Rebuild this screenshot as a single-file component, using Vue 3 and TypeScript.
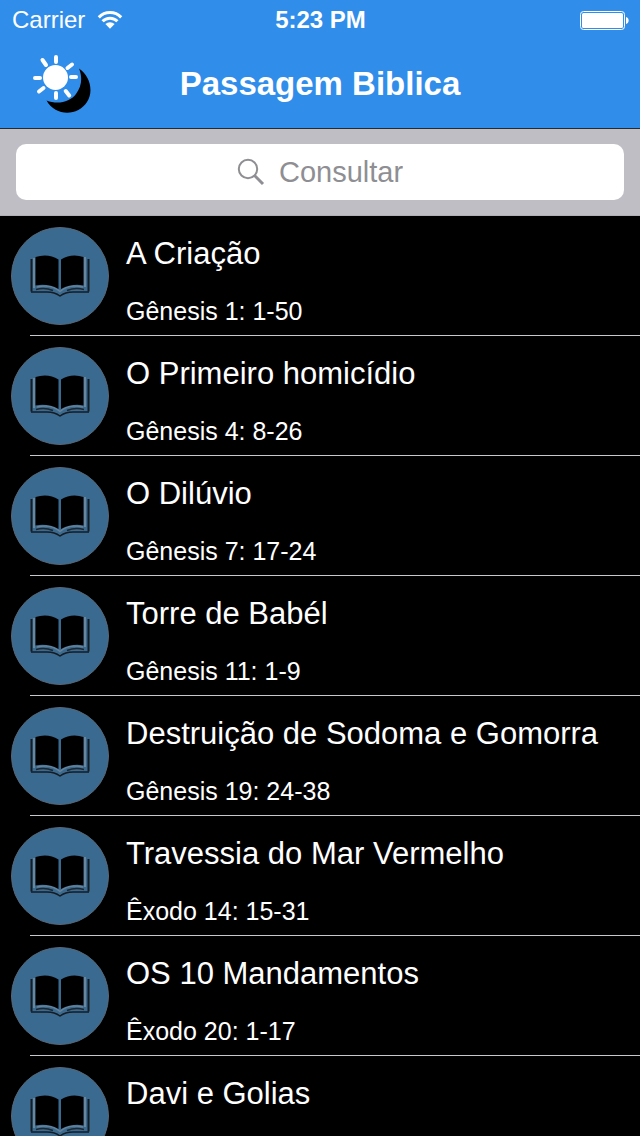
<script setup lang="ts">
import { computed, ref } from 'vue'

interface Passage {
  title: string
  reference: string
}

const passages: Passage[] = [
  { title: 'A Criação', reference: 'Gênesis 1: 1-50' },
  { title: 'O Primeiro homicídio', reference: 'Gênesis 4: 8-26' },
  { title: 'O Dilúvio', reference: 'Gênesis 7: 17-24' },
  { title: 'Torre de Babél', reference: 'Gênesis 11: 1-9' },
  { title: 'Destruição de Sodoma e Gomorra', reference: 'Gênesis 19: 24-38' },
  { title: 'Travessia do Mar Vermelho', reference: 'Êxodo 14: 15-31' },
  { title: 'OS 10 Mandamentos', reference: 'Êxodo 20: 1-17' },
  { title: 'Davi e Golias', reference: '' },
]

const query = ref('')
const light = ref(false)

const visible = computed(() =>
  passages.filter((p) => p.title.toLowerCase().includes(query.value.trim().toLowerCase())),
)
</script>

<template>
  <div class="screen" :class="{ light }">
    <header class="top">
      <div class="status">
        <div class="carrier">
          <span>Carrier</span>
          <svg width="26" height="20" viewBox="0 0 26 20" aria-hidden="true">
            <g fill="none" stroke="#fff" stroke-width="3">
              <path d="M1.8 7.4a15.5 15.5 0 0 1 22.4 0" />
              <path d="M5.6 11.3a10.3 10.3 0 0 1 14.8 0" />
            </g>
            <path d="M8.4 14a6.6 6.6 0 0 1 9.2 0L13 18.8z" fill="#fff" />
          </svg>
        </div>
        <time class="clock">5:23 PM</time>
        <svg class="battery" width="50" height="20" viewBox="0 0 50 20" aria-hidden="true">
          <rect x="1.5" y="1.5" width="44" height="18" rx="3" fill="none" stroke="#fff" />
          <rect x="3" y="3" width="41" height="15" rx="1.5" fill="#fff" />
          <path d="M47 7c3.500 .8 3.500 6.200 0 7z" fill="#fff" />
        </svg>
      </div>
      <nav class="bar">
        <button class="mode" type="button" aria-label="Modo noturno" @click="light = !light">
          <svg width="60" height="60" viewBox="32 54 60 60" aria-hidden="true">
            <path d="M79 68.500C90 76 94 91 87 102C78 116 56 117 46.500 100.500C58 105 70 102 76 94C82 86 82.500 77 79 68.500z" fill="#000" />
            <circle cx="55.500" cy="77.500" r="12.500" fill="#fff" />
            <g stroke="#fff" stroke-width="4" stroke-linecap="round">
              <path d="M56 57v5M56 93v5M35 78h5M71 77h5M42.500 60l3.500 5M65.700 91l3.500 4.500M67.500 68l4.500-3.500M39 91.500l4.500-3.500" />
            </g>
          </svg>
        </button>
        <h1>Passagem Biblica</h1>
      </nav>
    </header>

    <div class="search">
      <label class="field">
        <svg width="28" height="28" viewBox="0 0 28 28" aria-hidden="true">
          <circle cx="11" cy="11" r="9.200" fill="none" stroke="#8e8e93" stroke-width="2" />
          <path d="M17.500 17.500l8.500 8.500" stroke="#8e8e93" stroke-width="3" />
        </svg>
        <input v-model="query" type="text" placeholder="Consultar" aria-label="Consultar" />
      </label>
    </div>

    <ul class="list">
      <li v-for="p in visible" :key="p.title">
        <a class="row" href="#">
          <svg class="book" width="98" height="98" viewBox="0 0 98 98" aria-hidden="true">
            <circle cx="49" cy="49" r="48.500" fill="#3a6a8f" stroke="#56697a" />
            <path d="M20.500 32v32.500M77.500 32v32.500" stroke="#151c24" stroke-width="2" />
            <path d="M23 31v30M74 30v30" stroke="#7890a4" stroke-width="1.500" />
            <path d="M20 65h16c5 0 9 1 13 4c4-3 8-4 13-4h16" fill="none" stroke="#151c24" stroke-width="1.500" />
            <path d="M26 60c9-2 17-1 23 4.500c6-5.500 14-6.500 23-4.500" fill="none" stroke="#688298" stroke-width="1.500" />
            <path d="M24.500 30c8-2.500 16-2 23 2.500v29.500c-7-4-15-5-23-3.500z" fill="#000" />
            <path d="M50 32.500c7-4.500 15-5 22.500-2.500v28.500c-7-1.500-15-.5-22.500 3.500z" fill="#000" />
            <path d="M25 62.500c6-1.500 12-1 17 1M73 62.500c-6-1.500-12-1-17 1" fill="none" stroke="#1b2731" stroke-width="1.500" />
          </svg>
          <span class="text">
            <span class="title">{{ p.title }}</span>
            <span v-if="p.reference" class="reference">{{ p.reference }}</span>
          </span>
        </a>
      </li>
    </ul>
  </div>
</template>

<style>
body {
  margin: 0;
  background: #000;
}
</style>

<style scoped>
.screen {
  display: flex;
  flex-direction: column;
  height: 100vh;
  background: #000;
  color: #fff;
  font-family: "Liberation Sans", Arial, sans-serif;
}
.top {
  flex: none;
  background: #308dea;
  border-bottom: 1px solid #26292d;
}
.status {
  display: grid;
  grid-template-columns: 1fr auto 1fr;
  align-items: center;
  height: 40px;
  padding: 0 11px 0 12px;
  font-size: 24px;
  line-height: 40px;
}
.carrier {
  display: flex;
  align-items: center;
  gap: 12px;
}
.clock {
  font-weight: 700;
}
.battery {
  justify-self: end;
}
.bar {
  display: grid;
  grid-template-columns: 1fr auto 1fr;
  align-items: center;
  height: 88px;
  padding: 0 32px;
}
.mode {
  display: flex;
  justify-self: start;
  padding: 0;
  border: 0;
  background: none;
  cursor: pointer;
}
h1 {
  margin: 0;
  font-size: 33px;
  font-weight: 700;
  line-height: 42px;
}
.search {
  flex: none;
  padding: 15px 16px;
  background: #bfbec4;
  border-bottom: 1px solid #b0b0b5;
}
.field {
  display: flex;
  align-items: center;
  justify-content: center;
  gap: 14px;
  height: 56px;
  border-radius: 10px;
  background: #fff;
  cursor: text;
}
input {
  field-sizing: content;
  max-width: 80%;
  padding: 0;
  border: 0;
  outline: 0;
  background: none;
  color: #000;
  font: 29px/36px "Liberation Sans", Arial, sans-serif;
}
input::placeholder {
  color: #8e8e93;
  opacity: 1;
}
.list {
  flex: 1;
  min-height: 0;
  margin: 0;
  padding: 0;
  overflow-y: auto;
  scrollbar-width: none;
  list-style: none;
}
.row {
  display: flex;
  gap: 17px;
  height: 120px;
  box-sizing: border-box;
  padding: 11px 0 0 11px;
  color: inherit;
  text-decoration: none;
  background: linear-gradient(#c8c7cc, #c8c7cc) 30px 100% / 100% 1px no-repeat;
}
.book {
  flex: none;
}
.text {
  display: flex;
  flex-direction: column;
  gap: 25px;
  padding-top: 9px;
  white-space: nowrap;
}
.title {
  font-size: 31px;
  line-height: 36px;
}
.reference {
  font-size: 25px;
  line-height: 28px;
}
.light {
  background: #fff;
  color: #000;
}
</style>
